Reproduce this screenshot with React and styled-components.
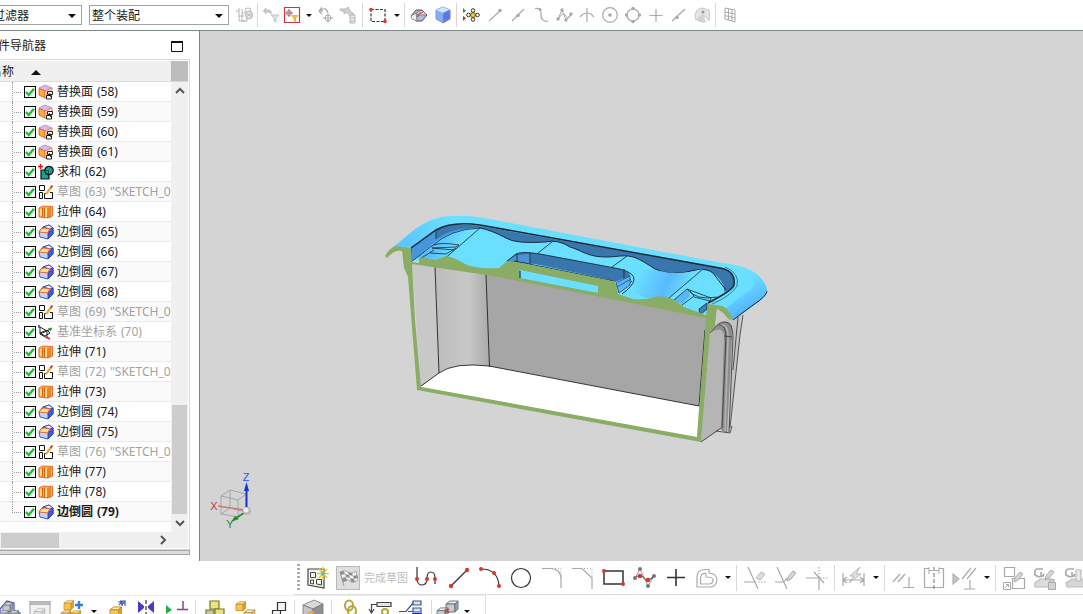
import React from 'react';
import styled, { createGlobalStyle } from 'styled-components';

const GlobalStyle = createGlobalStyle`
  * {
    box-sizing: border-box;
  }

  body {
    margin: 0;
    overflow: hidden;
    background: #fff;
    color: #1a1a1a;
    font-family: 'Noto Sans', 'Noto Sans CJK SC', sans-serif;
    font-size: 12px;
    line-height: 18px;
  }

  button, select, input {
    font: inherit;
    color: inherit;
    margin: 0;
    padding: 0;
  }
`;

const Shell = styled.div`
  display: flex;
  flex-direction: column;
  height: 100vh;
  overflow: hidden;
`;

const TopBar = styled.header`
  display: flex;
  flex: none;
  align-items: center;
  height: 31px;
  border-bottom: 1px solid #7d888b;
  overflow: hidden;
`;

const SelectBox = styled.label`
  display: grid;
  flex: none;
  align-items: center;
  width: ${(p) => p.$width}px;
  height: 20px;
  margin-left: ${(p) => p.$offset}px;
  border: 1px solid #a3a3a3;
`;

const Select = styled.select`
  grid-area: 1 / 1;
  appearance: none;
  height: 18px;
  padding: 1px 0 0 2px;
  border: 0;
  background: transparent;
`;

const SelectArrow = styled.span`
  grid-area: 1 / 1;
  justify-self: end;
  margin: 1px 5px 0 0;
  border: 4px solid transparent;
  border-top-color: #111;
  border-bottom: 0;
  pointer-events: none;
`;

const ToolGroup = styled.div`
  display: flex;
  flex: none;
  align-items: center;
  margin-left: ${(p) => p.$offset || 0}px;
`;

const ToolButton = styled.button`
  display: flex;
  flex: none;
  align-items: center;
  justify-content: center;
  width: ${(p) => p.$width}px;
  height: ${(p) => p.$height || 24}px;
  border: 0;
  background: transparent;

  svg {
    flex: none;
    overflow: visible;
  }
`;

const Caret = styled.span`
  border: 3px solid transparent;
  border-top-color: #111;
  border-bottom: 0;
`;

const Separator = styled.span`
  flex: none;
  width: 1px;
  height: ${(p) => p.$height || 24}px;
  margin: 0 2px;
  background: #d8d8d8;
`;

const Main = styled.main`
  display: flex;
  flex: 1;
  min-height: 0;
`;

const Sidebar = styled.aside`
  display: flex;
  flex: none;
  flex-direction: column;
  width: 200px;
  padding-bottom: 6px;
  border-right: 1px solid #7d888b;
  overflow: hidden;
`;

const SidebarTitle = styled.div`
  display: flex;
  flex: none;
  align-items: center;
  justify-content: space-between;
  height: 28px;
  padding: 2px 16px 0 0;
  margin-left: -2px;
`;

const WindowButton = styled.button`
  display: flex;
  border: 0;
  background: transparent;
`;

const TreeFrame = styled.section`
  display: flex;
  flex: 1;
  flex-direction: column;
  min-height: 0;
  margin-right: 9px;
  padding: 1px 1px 1px 0;
  border: 1px solid #d9d9d9;
  border-left: 0;
`;

const TreeHeader = styled.div`
  display: flex;
  flex: none;
  height: 21px;
  border-bottom: 1px solid #dadada;
  background: #f0f0f0;
`;

const HeaderName = styled.div`
  display: flex;
  flex: 1;
  align-items: center;
  gap: 17px;
  margin-left: -10px;
  padding-top: 2px;
`;

const SortMark = styled.span`
  border: 5px solid transparent;
  border-bottom-color: #111;
  border-top: 0;
`;

const HeaderCorner = styled.div`
  width: 17px;
  background: #bdbdbd;
`;

const TreeBody = styled.div`
  display: flex;
  flex: 1;
  min-height: 0;
`;

const TreeList = styled.ul`
  flex: 1;
  min-width: 0;
  margin: 0;
  padding: 0;
  list-style: none;
  overflow: hidden;
`;

const TreeRow = styled.li`
  display: flex;
  align-items: center;
  height: 20px;
  padding-left: 12px;
  border-bottom: 1px solid #ebebeb;
  white-space: nowrap;
  font-weight: ${(p) => (p.$bold ? 700 : 400)};
  color: ${(p) => (p.$dim ? '#a2a2a2' : '#1a1a1a')};

  &:nth-child(even) {
    background: #fafafa;
  }
`;

const Branch = styled.span`
  flex: none;
  align-self: flex-start;
  width: 9px;
  height: ${(p) => (p.$last ? 11 : 20)}px;
  margin-right: 3px;
  border-left: 1px dotted #9a9a9a;
  background: repeating-linear-gradient(90deg, transparent 0 1px, #9a9a9a 1px 2px) 0 10px / 100% 1px no-repeat;
`;

const RowLabel = styled.label`
  display: flex;
  align-items: center;

  svg {
    flex: none;
    margin: 0 3px 0 2px;
  }
`;

const RowText = styled.span`
  display: flex;
  gap: 4px;
`;

const Check = styled.input`
  flex: none;
  appearance: none;
  width: 12px;
  height: 12px;
  border: 1px solid #000;
  background: #fff;

  &:checked {
    background: #fff url("data:image/svg+xml,%3Csvg xmlns='http://www.w3.org/2000/svg' viewBox='0 0 10 10'%3E%3Cpath d='M1 5L3.7 8L9 1.8' fill='none' stroke='%2310c62e' stroke-width='2.4'/%3E%3C/svg%3E");
  }
`;

const VScroll = styled.div`
  display: flex;
  flex: none;
  flex-direction: column;
  width: 17px;
  padding: 0 1px;
  background: #f0f0f0;
`;

const ScrollButton = styled.button`
  display: flex;
  flex: none;
  align-items: center;
  justify-content: center;
  width: 15px;
  height: 18px;
  border: 0;
  background: transparent;
`;

const ScrollSpace = styled.span`
  flex: ${(p) => p.$share};
`;

const ScrollThumb = styled.span`
  flex: ${(p) => p.$share};
  background: #cdcdcd;
`;

const HScroll = styled.div`
  display: flex;
  flex: none;
  align-items: center;
  height: 16px;
  padding: 0 18px 0 1px;
  background: #f0f0f0;

  span {
    height: 15px;
  }
`;

const Splitter = styled.div`
  flex: none;
  height: 5px;
  margin: 0 9px 0 0;
  border: 1px solid #a5a5a5;
  border-left: 0;
  background: #dcdcdc;
`;

const Viewport = styled.section`
  flex: 1;
  min-width: 0;
  background: #d4d4d4;
  overflow: hidden;

  svg {
    display: block;
    width: 883px;
    height: 530px;
  }
`;

const SketchBar = styled.div`
  display: flex;
  flex: none;
  align-items: center;
  height: 34px;
  margin-left: 294px;
  border-bottom: 1px solid #dcdcdc;
  overflow: hidden;
`;

const Grip = styled.span`
  flex: none;
  width: 3px;
  height: 27px;
  margin: 0 3px;
  background: repeating-linear-gradient(#ababab 0 2px, transparent 2px 4px);
`;

const FinishButton = styled.button`
  display: flex;
  flex: none;
  align-items: center;
  gap: 4px;
  width: 75px;
  margin-left: 4px;
  border: 0;
  background: transparent;
  color: #bdbdbd;
  font-size: 11px;
  white-space: nowrap;
`;

const FinishIcon = styled.span`
  display: flex;
  align-items: center;
  justify-content: center;
  width: 24px;
  height: 24px;
  border: 1px solid #b8b8b8;
  background: #dedede;
`;

const FeatureBar = styled.div`
  display: flex;
  flex: none;
  align-items: flex-start;
  height: 19px;
  overflow: hidden;
`;

const FeatureGroup = styled(ToolGroup)`
  padding: 4px ${(p) => p.$end || 0}px 0 0;
  height: 32px;
  align-items: flex-start;
  border-top: 1px solid #ededed;
  border-right: ${(p) => (p.$end ? '1px solid #dcdcdc' : '0')};
`;

const G = '#a9a9a9';

function Icon({ size = 18, children, stroke = G, width = 1.2 }) {
  return (
    <svg width={size} height={size} viewBox={`0 0 ${size} ${size}`} fill="none" stroke={stroke} strokeWidth={width} aria-hidden="true">
      {children}
    </svg>
  );
}

const Cube = ({ x = 0, y = 0, s = 1, top = '#fff0b4', left = '#f6c650', right = '#e2a32c', line = '#c08a2a' }) => (
  <g transform={`translate(${x} ${y}) scale(${s})`} stroke={line} strokeWidth="1" strokeLinejoin="round">
    <path d="M0 4L4 1H12L9 4Z" fill={top} />
    <path d="M0 4H9V12H0Z" fill={left} />
    <path d="M9 4L12 1V9L9 12Z" fill={right} />
  </g>
);

const Dot = ({ x, y, r = 2, c = '#d9372a' }) => <circle cx={x} cy={y} r={r} fill={c} stroke="none" />;

const Pencil = ({ x, y, c = '#d6d6d6', line = '#a9a9a9' }) => (
  <path d={`M${x} ${y}l1-4l5-6l3 2l-5 6z`} fill={c} stroke={line} strokeWidth="1" />
);

/* top bar */
const topIcons = {
  assembly: (
    <Icon stroke="#b4b4b4" width={1}>
      <path d="M1 5H4V15H10M4 5V2M4 10H9M7 3V15M7 7H12V15H7" />
      <ellipse cx="13" cy="4" rx="3" ry="2" />
      <ellipse cx="14" cy="9" rx="3.500" ry="4" fill="#e6e6e6" />
      <path d="M11 7L17 11M11 11L17 7" strokeWidth=".8" />
    </Icon>
  ),
  undoFilter: (
    <Icon>
      <path d="M1 5L4 2V4H8Q10 5 9 8Q8 5.500 4 6V8Z" fill="#c4c4c4" stroke="#c4c4c4" strokeWidth=".8" />
      <path d="M9 9H17L14 12V16L12 15V12Z" fill="#e2e2e2" stroke="#c2c2c2" strokeWidth="1" />
    </Icon>
  ),
  pickFilter: (
    <Icon>
      <path d="M1.500 1.500H16.500V16.500H1.500Z" stroke="#cc3440" fill="#fff" />
      <circle cx="6" cy="7" r="2.400" stroke="#8a5a62" strokeWidth=".8" />
      <path d="M6 3V11M2.500 7H10" stroke="#8a4a52" strokeWidth=".8" />
      <path d="M8.500 9.500H15L12.500 12V15.500L11 14.500V12Z" fill="#f3ba3e" stroke="#e79f2b" strokeWidth=".7" />
    </Icon>
  ),
  rotatePick: (
    <Icon>
      <path d="M2 5H6M2 5L5 1.500M2 5L5 8M4 4.500Q9 0 11 7" />
      <circle cx="11" cy="12" r="3" strokeWidth="1" />
      <path d="M11 7.500V17M6 12H16" strokeWidth="1" />
    </Icon>
  ),
  pickTree: (
    <Icon stroke="#b6b6b6" width={1}>
      <path d="M1 3H7L9 1L11 5L15 8L12 11L8 6L5 8V5H2Z" fill="#d2d2d2" />
      <path d="M11 9H16V17H11ZM11 12H16M11 15H16" fill="#eee" />
    </Icon>
  ),
  marquee: (
    <Icon>
      <path d="M2 3.500H16V15.500H2Z" stroke="#333" strokeDasharray="3 1.500" />
      <Dot x="2" y="3.500" r="1.800" />
      <Dot x="16" y="15.500" r="1.800" />
    </Icon>
  ),
  clip: (
    <Icon stroke="#555">
      <path d="M1 10L6 4H12L17 9L12 15H6Z" fill="#a9bfdd" strokeWidth="1" />
      <path d="M1 10L6 7L7 15L2 13Z" fill="#e9eef8" strokeWidth=".6" />
      <path d="M6 7L12 4L17 9L8 9Z" fill="#d7dbe2" strokeWidth=".6" />
      <path d="M7.500 11L9 8L13 6" stroke="#dd3b32" />
    </Icon>
  ),
  shaded: (
    <Icon>
      <path d="M2 4L9 1L16 4V13L9 17L2 13Z" fill="#7fb0f6" stroke="#7d98dd" strokeWidth="1" />
      <path d="M2 4L9 1L16 4L9 7Z" fill="#d3e8fb" stroke="#9fc0ea" strokeWidth=".7" />
      <path d="M9 7L16 4V13L9 17Z" fill="#4f7ce8" stroke="#c787a4" strokeWidth=".7" />
    </Icon>
  ),
  snap: (
    <Icon>
      <path d="M1 2L4 5L1 7Z" fill="#14a52b" stroke="none" />
      <path d="M1 10L4 12L1 15Z" fill="#d62222" stroke="none" />
      <path d="M5 9H17M11 3V15" stroke="#333" />
      <circle cx="11" cy="9" r="2.300" fill="#f7d42d" stroke="#a57d15" />
      <g stroke="#333" fill="#fff" strokeWidth="1">
        <circle cx="11" cy="4.500" r="1.800" />
        <circle cx="11" cy="13.500" r="1.800" />
        <circle cx="6.500" cy="9" r="1.800" />
        <circle cx="15.500" cy="9" r="1.800" />
      </g>
    </Icon>
  ),
  endPoint: <Icon><path d="M3 15L14 5" /><Dot x="14" y="4.500" r="1.800" c={G} /></Icon>,
  midPoint: <Icon><path d="M3 15L15 3" /><Dot x="9" y="9.500" r="1.800" c={G} /></Icon>,
  curve: <Icon><path d="M3 2.500Q9 1.500 9 7Q8 15.500 16 15.500" /><Dot x="8" y="3.500" r="1.500" c={G} /></Icon>,
  poles: (
    <Icon width={1}>
      <path d="M3 13L7 4L11 14L16 8M3 13Q8 5 11 10T16 8" />
      <Dot x="3" y="13" r="1.700" c={G} /><Dot x="7" y="4" r="1.700" c={G} /><Dot x="11" y="14" r="1.700" c={G} /><Dot x="16" y="8" r="1.700" c={G} />
    </Icon>
  ),
  intersect: <Icon><path d="M2 11Q9 3 16 11M9 2V16" /></Icon>,
  centre: <Icon><circle cx="9" cy="9" r="7.300" /><Dot x="9" y="9" r="1.800" c={G} /></Icon>,
  quadrant: (
    <Icon>
      <circle cx="9" cy="9" r="6" />
      <Dot x="9" y="2.500" r="1.700" c={G} /><Dot x="9" y="15.500" r="1.700" c={G} />
      <Dot x="2.500" y="9" r="1.700" c={G} /><Dot x="15.500" y="9" r="1.700" c={G} />
    </Icon>
  ),
  plus: <Icon><path d="M9 3V16M2.500 9.500H15.500" /></Icon>,
  onCurve: <Icon><path d="M2 15L15 3" /><Dot x="7" y="11.500" r="1.800" c={G} /></Icon>,
  onFace: (
    <Icon>
      <path d="M2 9Q4 2 9 2L16 4Q17 8 16 15Q13 9 9 9Q6 11 3 14Z" fill="#e6e6e6" stroke="#c6c6c6" strokeWidth="1" />
      <path d="M3 14Q8 8 12 10Q11 14 14 16Q8 18 3 14" fill="#d2d2d2" stroke="none" />
      <Dot x="10" y="6" r="1.600" c="#999" />
    </Icon>
  ),
  grid: <Icon width={1}><path d="M4 2L14 4V16L4 13ZM7.500 3V14M11 3.500V15M4 6L14 8M4 9.500L14 12" /></Icon>,
};

const topTools = [
  ['assembly', 23, 'Assembly selection'], '|',
  ['undoFilter', 22, 'Reset filter'], ['pickFilter', 20, 'General filter'], ['v', 14],
  ['rotatePick', 20, 'Previous'], ['pickTree', 24, 'Select in tree'], '|',
  ['marquee', 26, 'Rectangle select'], ['v', 11], '|',
  ['clip', 24, 'Edge highlight'], ['shaded', 23, 'Shaded'], '|',
  ['snap', 24, 'Snap point'], ['endPoint', 23, 'End point'], ['midPoint', 23, 'Mid point'],
  ['curve', 23, 'Control point'], ['poles', 23, 'Pole'], ['intersect', 23, 'Intersection'],
  ['centre', 23, 'Arc centre'], ['quadrant', 23, 'Quadrant'], ['plus', 23, 'Existing point'],
  ['onCurve', 23, 'Point on curve'], ['onFace', 23, 'Point on face'], '|',
  ['grid', 24, 'Grid'],
];

/* sketch bar */
const sketchIcons = {
  sketch: (
    <Icon size={24} stroke="#444">
      <path d="M2 3H18V22L2 19Z" fill="#f1f5ec" />
      <path d="M4.500 6.500H9.500V11.500H4.500ZM4.500 14H7.500V18L4.500 17.500ZM10.500 13.500H15.500V19L10.500 18Z" strokeWidth="1" />
      <path d="M17 1V14M11 7.500H23M13 3L21 12M21 3L13 12" stroke="#eeca21" strokeWidth="1.500" />
      <path d="M15 7.500H19M17 5.500V9.500" stroke="#57b8dc" strokeWidth="2" />
    </Icon>
  ),
  profile: (
    <Icon size={24} stroke="#333">
      <path d="M2 1V14Q3 19 7 19Q12 19 12 12Q12 6 16 6Q20 6 20 12V18" />
      <Dot x="2" y="13" /><Dot x="12" y="13" /><Dot x="20" y="13" />
    </Icon>
  ),
  line: <Icon size={24} stroke="#333"><path d="M4 20L20 4" /><Dot x="4" y="20" r="2.200" /><Dot x="20" y="4" r="2.200" /></Icon>,
  arc: <Icon size={24} stroke="#333"><path d="M3 3Q20 3 21 20" /><Dot x="3" y="3" /><Dot x="16" y="7" /><Dot x="21" y="20" /></Icon>,
  circle: <Icon size={24} stroke="#333"><circle cx="12" cy="12" r="9.500" /></Icon>,
  fillet: <Icon size={24}><path d="M2 2.500H10Q21 3 21 13V22" /><path d="M12 2.500H21V12" strokeDasharray="1 2" /></Icon>,
  chamfer: <Icon size={24}><path d="M1 2.500H11L21 12V23" /><path d="M13 2.500H21V11" strokeDasharray="1 2" /></Icon>,
  rect: <Icon size={24} stroke="#333"><path d="M2 5H21V18H2Z" strokeWidth="1.500" /><Dot x="2" y="5" /><Dot x="21" y="18" /></Icon>,
  spline: (
    <Icon size={24} stroke="#555">
      <path d="M2 12L7 3L15 20L21 10" stroke="#999" strokeWidth="1" />
      <path d="M2 12Q7 7 11 12Q15 17 21 10" />
      <Dot x="2" y="12" c="#777" /><Dot x="7" y="3" c="#777" /><Dot x="15" y="20" c="#777" /><Dot x="21" y="10" c="#777" />
      <Dot x="7" y="10" r="2.300" /><Dot x="15" y="14" r="2.300" />
    </Icon>
  ),
  point: <Icon size={24} stroke="#333" width={1.6}><path d="M12 3V20M3 11.500H21" /></Icon>,
  offset: (
    <Icon size={24}>
      <path d="M2 21V10Q3 4 9 3.500H14V7Q22 8 22 14Q21 21 15 21Z" />
      <path d="M5.500 18V12Q6 7 11 7.500V11Q18 11 18 14Q18 18 14 18Z" />
    </Icon>
  ),
  trim: <Icon size={24}><path d="M5 1L15 23M1 16H13" /><path d="M15 16H23" strokeDasharray="1.500 1.500" /><path d="M13 12L18 6L22 8L17 14Z" fill="#ddd" strokeWidth=".8" /></Icon>,
  extend: <Icon size={24}><path d="M3 1L13 23M1 16H10L13 12" /><Pencil x={13} y={15} /></Icon>,
  corner: <Icon size={24}><path d="M1 12H14V24M9 6L19 17" /><path d="M14 1V11M15 12H23" strokeDasharray="1.500 1.500" /></Icon>,
  dimension: <Icon size={24}><path d="M1 7V20M22 7V20M1 14H22M5 11L1 14L5 17M18 11L22 14L18 17" /><path d="M18 1L8 10H12L7 17L19 8H14Z" fill="#e2e2e2" strokeWidth=".8" /></Icon>,
  constrain: <Icon size={24}><path d="M2 16L9 8M7 16L14 8M18 11V21M12 21.500H23" /></Icon>,
  symmetric: <Icon size={24}><path d="M7 2.500H2.500V21.500H21.500V2.500H17" /><path d="M12 1V23" strokeDasharray="4 2" stroke="#888" /><path d="M7 1V8M17 1V8M7 4.500H11M13 4.500H17" strokeWidth="1" /></Icon>,
  autoConstrain: <Icon size={24}><path d="M0 8L6 13L0 18Z" fill="#c4c4c4" stroke="#b2b2b2" /><path d="M9 13L18 2M14 13L23 2M17 14V23M11 23H22" /></Icon>,
  showConstraint: (
    <Icon size={24}>
      <path d="M2.500 1.500H12.500V10.500H2.500ZM10.500 12.500H22.500V22.500H10.500Z" />
      <Pencil x={12} y={16} />
      <path d="M1.500 16.500H8.500V23.500H1.500ZM3 22L6.500 18.500M4 18.500H6.500V21" strokeWidth="1" />
    </Icon>
  ),
  convert: (
    <Icon size={24}>
      <path d="M10 3H4Q1 4 2 9Q8 13 11 8M8 6V10H11" strokeWidth="1.600" />
      <path d="M2 17L7 13H18L21 17L18 21H2Z" fill="#dcdcdc" stroke="#bcbcbc" />
      <Pencil x={12} y={14} />
      <path d="M15.500 16.500H22.500V23.500H15.500ZM17 16V13.500H21V16" fill="#d4d4d4" strokeWidth="1" />
    </Icon>
  ),
  alternate: (
    <Icon size={24}>
      <path d="M10 3H4Q1 4 2 9Q8 13 11 8M8 6V10H11" strokeWidth="1.600" />
      <path d="M2 17L8 13H20L24 17V21H3Z" fill="#d6d6d6" stroke="#bcbcbc" />
      <path d="M12 4H17V15H12Z" fill="#e8e8e8" stroke="#bcbcbc" />
    </Icon>
  ),
};

const sketchTools = [
  ['profile', 32, 'Profile'], ['line', 31, 'Line'], ['arc', 31, 'Arc'], ['circle', 31, 'Circle'],
  ['fillet', 31, 'Fillet'], ['chamfer', 31, 'Chamfer'], ['rect', 31, 'Rectangle'], ['spline', 31, 'Spline'],
  ['point', 31, 'Point'], ['offset', 31, 'Offset curve'], ['v', 12], '|',
  ['trim', 31, 'Quick trim'], ['extend', 31, 'Quick extend'], ['corner', 31, 'Make corner'], '|',
  ['dimension', 33, 'Dimension'], ['v', 12], '|',
  ['constrain', 31, 'Constraints'], ['symmetric', 31, 'Symmetric'], ['autoConstrain', 31, 'Auto constrain'], ['v', 13], '|',
  ['showConstraint', 31, 'Show constraints'], ['convert', 31, 'Convert'], ['alternate', 31, 'Alternate solution'],
];

/* feature bar */
const grayCube = { top: '#eceff1', left: '#c6ccd0', right: '#9ba3a8', line: '#6d7478' };
const featureIcons = {
  parts: (
    <Icon size={22}>
      <path d="M1 9L8 1L15 3V10L21 13V22H1Z" fill="#e4e9f8" stroke="#4a53b8" />
      <Cube x={4} y={2} s={0.8} {...grayCube} />
      <Cube x={0} y={10} s={0.8} {...grayCube} />
      <Cube x={10} y={10} s={0.8} {...grayCube} />
    </Icon>
  ),
  windowPart: (
    <Icon size={22} stroke="#b5b5b5">
      <path d="M1 1.500H21V22H1Z" fill="#f2f2f2" />
      <path d="M1 1.500H21V4.500H1Z" fill="#b9bdc0" />
      <Cube x={5} y={8} s={0.9} top="#f8f8f8" left="#e4e4e4" right="#d2d2d2" line="#b8b8b8" />
    </Icon>
  ),
  addPart: (
    <Icon size={22}>
      <Cube x={3} y={0} s={0.8} />
      <Cube x={0} y={10} s={0.8} />
      <Cube x={10} y={10} s={0.8} />
      <path d="M18 1V9M14 5H22" stroke="#2d7fe0" strokeWidth="2.400" />
    </Icon>
  ),
  movePart: <Icon size={22}><Cube x={3} y={6} s={0.95} /><path d="M12 5L15 2H11M15 2V6M15 5L18 1H13M18 1V6" stroke="#3e5da6" /></Icon>,
  mirror: <Icon size={22}><path d="M3 1L9 6V8L3 13ZM19 1L13 6V8L19 13Z" fill="#4a3bc4" stroke="none" /><path d="M11 0V22" stroke="#333" strokeDasharray="4 2" /></Icon>,
  assemblyConstraint: <Icon size={22}><path d="M0 5L6 10L0 14Z" fill="#23b04a" stroke="none" /><path d="M17 1V9M11 9.500H22" stroke="#8d3f88" strokeWidth="1.500" /></Icon>,
  blocks: (
    <Icon size={22} stroke="#77782f">
      <path d="M6 1H15V9H6Z" fill="#eee27a" /><path d="M2 10H10V20H2Z" fill="#c4c79b" /><path d="M11 9H20V19H11Z" fill="#eee27a" />
    </Icon>
  ),
  bodies: <Icon size={22}><Cube x={1} y={1} s={0.8} /><Cube x={9} y={9} s={0.9} top="#eee" left="#f0dca6" right="#ccc" /></Icon>,
  squares: <Icon size={22} stroke="#333"><path d="M12.500 2.500H20.500V10.500H12.500ZM7.500 10.500H15.500V18.500H7.500Z" fill="#f4f4f4" /></Icon>,
  block: (
    <Icon size={22} stroke="#777">
      <path d="M1 5L12 0L21 4L11 9Z" fill="#d6dadc" strokeWidth=".8" /><path d="M1 5L11 9V22H1Z" fill="#c2c7ca" strokeWidth=".8" /><path d="M11 9L21 4V22H11Z" fill="#8c9194" strokeWidth=".8" />
      <path d="M5 15Q9 10 12 13" stroke="#efa93a" strokeWidth="2" />
    </Icon>
  ),
  clip: <Icon size={22} stroke="#b3a83a" width={2}><ellipse cx="9" cy="5.500" rx="4" ry="5" /><ellipse cx="12" cy="11" rx="4" ry="5" /></Icon>,
  measure: <Icon size={22} stroke="#444"><path d="M1 4.500H7M1.500 4.500V12M-1 9L1.500 13L4 9" /><path d="M7 2.500H21V6.500H7Z" fill="#e4e4e4" /><circle cx="15" cy="12" r="3" stroke="#b3a83a" strokeWidth="2" /></Icon>,
  relations: <Icon size={22} stroke="#3d558c"><path d="M-1 11.500H6L13 3M8 11.500H13" /><path d="M13 1H21V5H13ZM13 8H21V12H13Z" fill="#d8e2f5" /><path d="M12 14H22" stroke="#2327b8" strokeWidth="2" /></Icon>,
  sequence: <Icon size={22}><Cube x={9} y={0} s={1} {...grayCube} /><Cube x={0} y={7} s={0.9} {...grayCube} /><path d="M8 9L12 13M12 9L8 13" stroke="#d23b32" /></Icon>,
};

const featureGroups = [
  {
    tools: [
      ['parts', 20, 'Components'], ['windowPart', 40, 'Window'], ['addPart', 24, 'Add component'], ['v', 20],
      ['movePart', 28, 'Move component'], ['mirror', 28, 'Mirror'], ['assemblyConstraint', 33, 'Assembly constraints'], '|',
      ['blocks', 34, 'Unite'], ['bodies', 27, 'Bodies'], ['squares', 33, 'Pattern'],
    ],
  },
  {
    end: 12,
    tools: [
      '|', ['block', 32, 'Block'], '|', ['clip', 34, 'Link'], ['measure', 25, 'Measure'], ['relations', 36, 'Relations'], '|',
      ['sequence', 27, 'Sequence'], ['v', 12],
    ],
  },
];

/* model tree */
const treeIcons = {
  replace: (
    <Icon size={16} width={0.8}>
      <path d="M1 4L7 1L14 4L7 7Z" fill="#dcb8f3" stroke="#b07fd0" />
      <path d="M1 4.500L7 7V14L1 11Z" fill="#fdaf2d" stroke="#e2502a" />
      <path d="M7 7L14 4V8H9V14H7Z" fill="#fbe3c5" stroke="#d9775c" />
      <path d="M9.500 7.500H14.500V10.500H9.500ZM8.500 11.500H13.500V15H8.500ZM11 9L13 13" fill="#fff" stroke="#222" strokeWidth="1" />
    </Icon>
  ),
  unite: (
    <Icon size={16}>
      <path d="M0 2.500H5M2.500 0V5" stroke="#e01313" strokeWidth="1.300" />
      <path d="M3 6H11V15H3Z" fill="#1f9d91" stroke="#111" />
      <circle cx="11" cy="6.500" r="4.200" fill="#1f9d91" stroke="#111" />
      <path d="M7.500 6.500H10.500V10" stroke="#0c4f4a" strokeWidth="1" />
    </Icon>
  ),
  sketch: (
    <Icon size={16} stroke="#111" width={1}>
      <path d="M1.500 1.500H6.500V6.500H1.500ZM1.500 8.500V14.500H4.500V8.500ZM6.500 9.500H8.500M12 8.500H14.500V14.500H6.500V9.500" />
      <path d="M8 10L13 3.500" stroke="#e8a93a" strokeWidth="2.200" />
      <path d="M12.500 4L14.500 1.500" stroke="#b8442f" strokeWidth="2" />
    </Icon>
  ),
  extrude: (
    <Icon size={16} width={0.9}>
      <path d="M1 4L5 2L14.500 2.500V12L10 14L1 13Z" fill="#fcae2f" stroke="#e2622a" />
      <path d="M4.500 4V13M6.500 3.500V13.500M10 4V14M12 3V13" stroke="#d05a1c" />
      <path d="M3 5V12M8.200 4V13" stroke="#ffe680" strokeWidth="1.600" />
    </Icon>
  ),
  blend: (
    <Icon size={16} width={0.9}>
      <path d="M1 8L5 3L11 1L15 4V10L10 15L2 13Z" fill="#c4d5fa" stroke="#2746c0" />
      <path d="M5 3L11 1L15 4L12 5Z" fill="#e6ecfd" stroke="#2746c0" />
      <path d="M10 8L15 4V10L10 15Z" fill="#3c5ee2" stroke="#2442bb" />
      <path d="M1 8Q3 4 6 4L13 5Q10 6 10 9Z" fill="#fde58a" stroke="#e5522f" />
    </Icon>
  ),
  datum: (
    <Icon size={16} stroke="#222" width={1}>
      <path d="M2 3V10L9 14M2 3L9 7V13M2 10L13 5M2 9L9 6L12 9L7 12Z" />
      <path d="M1 1V4" stroke="#2734d6" strokeWidth="1.500" />
      <path d="M10 5L14 4L12 7" stroke="#149a2e" />
      <path d="M8 13L12 15" stroke="#dd1f2f" strokeWidth="1.800" />
    </Icon>
  ),
};

const features = [
  ['replace', '替换面', '(58)'],
  ['replace', '替换面', '(59)'],
  ['replace', '替换面', '(60)'],
  ['replace', '替换面', '(61)'],
  ['unite', '求和', '(62)'],
  ['sketch', '草图', '(63)', '"SKETCH_0'],
  ['extrude', '拉伸', '(64)'],
  ['blend', '边倒圆', '(65)'],
  ['blend', '边倒圆', '(66)'],
  ['blend', '边倒圆', '(67)'],
  ['blend', '边倒圆', '(68)'],
  ['sketch', '草图', '(69)', '"SKETCH_0'],
  ['datum', '基准坐标系', '(70)'],
  ['extrude', '拉伸', '(71)'],
  ['sketch', '草图', '(72)', '"SKETCH_0'],
  ['extrude', '拉伸', '(73)'],
  ['blend', '边倒圆', '(74)'],
  ['blend', '边倒圆', '(75)'],
  ['sketch', '草图', '(76)', '"SKETCH_0'],
  ['extrude', '拉伸', '(77)'],
  ['extrude', '拉伸', '(78)'],
  ['blend', '边倒圆', '(79)'],
];

function Tools({ items, icons, height }) {
  return items.map((item, i) => {
    if (item === '|') return <Separator key={i} $height={height} />;
    const [name, width, label] = item;
    return (
      <ToolButton key={i} type="button" $width={width} $height={height} aria-label={label || 'More'}>
        {name === 'v' ? <Caret /> : icons[name]}
      </ToolButton>
    );
  });
}

function Chevron({ d }) {
  return (
    <svg width="10" height="10" viewBox="0 0 10 10" fill="none" stroke="#555" strokeWidth="2" aria-hidden="true">
      <path d={d} />
    </svg>
  );
}

function Navigator() {
  return (
    <Sidebar>
      <SidebarTitle>
        <span>件导航器</span>
        <WindowButton type="button" aria-label="Maximize">
          <svg width="12" height="11" viewBox="0 0 12 11" fill="none" stroke="#111">
            <path d="M.5 .5H11.500V10.500H.5Z" />
            <path d="M0 1H12" strokeWidth="2" />
          </svg>
        </WindowButton>
      </SidebarTitle>
      <TreeFrame>
        <TreeHeader>
          <HeaderName>
            <span>名称</span>
            <SortMark />
          </HeaderName>
          <HeaderCorner />
        </TreeHeader>
        <TreeBody>
          <TreeList>
            {features.map(([icon, name, number, sketch], i) => (
              <TreeRow key={number} $dim={icon === 'sketch' || icon === 'datum'} $bold={i === features.length - 1}>
                <Branch $last={i === features.length - 1} />
                <RowLabel>
                  <Check type="checkbox" defaultChecked />
                  {treeIcons[icon]}
                  <RowText>
                    <span>{name}</span>
                    <span>{number}</span>
                    {sketch && <span>{sketch}</span>}
                  </RowText>
                </RowLabel>
              </TreeRow>
            ))}
          </TreeList>
          <VScroll>
            <ScrollButton type="button" aria-label="Scroll up"><Chevron d="M1 7L5 3L9 7" /></ScrollButton>
            <ScrollSpace $share={305} />
            <ScrollThumb $share={109} />
            <ScrollButton type="button" aria-label="Scroll down"><Chevron d="M1 3L5 7L9 3" /></ScrollButton>
          </VScroll>
        </TreeBody>
        <HScroll>
          <ScrollThumb $share={58} />
          <ScrollSpace $share={96} />
          <ScrollButton type="button" aria-label="Scroll right"><Chevron d="M3 1L7 5L3 9" /></ScrollButton>
        </HScroll>
      </TreeFrame>
      <Splitter />
    </Sidebar>
  );
}

function Triad() {
  return (
    <g fill="none" fontFamily="'Liberation Sans', sans-serif" fontSize="11" textAnchor="middle">
      <path d="M221 496L230 490L246 494V512L238 517L221 514ZM221 496L238 500V517M238 500L246 494M230 490V508L221 514M230 508L246 512" stroke="#a6a6a6" />
      <path d="M218 506L244 510" stroke="#c77878" strokeWidth="1.500" />
      <path d="M246.500 509V490" stroke="#1236cf" strokeWidth="2" />
      <path d="M244 491L246.500 482L249 491Z" fill="#1236cf" />
      <path d="M244 513L236 518" stroke="#238c33" strokeWidth="2" />
      <path d="M231 522L235 516L239 519Z" fill="#238c33" />
      <circle cx="247" cy="511" r="4" fill="#b8b8b8" />
      <circle cx="246" cy="510" r="2.500" fill="#ececec" />
      <text x="246" y="481" fill="#2455f0">Z</text>
      <text x="214" y="510" fill="#c23434">X</text>
      <text x="230" y="528" fill="#238c33">Y</text>
    </g>
  );
}

function Model() {
  return (
    <svg viewBox="200 31 883 530" role="img" aria-label="Section view of the box and lid">
      <defs>
        <linearGradient id="round" x1="0" x2="1">
          <stop offset="0" stopColor="#bcbcbc" />
          <stop offset=".6" stopColor="#c8c8c8" />
          <stop offset="1" stopColor="#a9a9a9" />
        </linearGradient>
        <linearGradient id="rimEnd" x1="745" y1="280" x2="758" y2="304" gradientUnits="userSpaceOnUse">
          <stop offset="0" stopColor="#6adfff" />
          <stop offset="1" stopColor="#55b4ff" />
        </linearGradient>
        <linearGradient id="rimStart" x1="404" y1="240" x2="450" y2="222" gradientUnits="userSpaceOnUse">
          <stop offset="0" stopColor="#5cc6ff" />
          <stop offset="1" stopColor="#6adfff" />
        </linearGradient>
        <linearGradient id="waveA" x1="435" y1="240" x2="470" y2="262" gradientUnits="userSpaceOnUse">
          <stop offset="0" stopColor="#57b9fb" />
          <stop offset=".55" stopColor="#6adfff" />
          <stop offset="1" stopColor="#6adfff" />
        </linearGradient>
        <linearGradient id="waveB" x1="638" y1="272" x2="686" y2="292" gradientUnits="userSpaceOnUse">
          <stop offset="0" stopColor="#6adfff" />
          <stop offset=".6" stopColor="#5abaff" />
          <stop offset="1" stopColor="#6adfff" />
        </linearGradient>
      </defs>

      {/* box side with the handle rib */}
      <path d="M708 318L741 315L739 345L729 433L721 429L701 442Z" fill="#c4c4c4" />
      <path d="M710 333L724 325L722 428L701 442Z" fill="#b5b5b5" />
      <path d="M710 333Q725 315 732 326L732 340L727 433L721 430L724 335Q722 325 710 333Z" fill="#8e8e8e" />
      <path d="M720 326Q728 322 728 338L725 431" stroke="#b4b4b4" strokeWidth="1.500" fill="none" />
      <path d="M710 333Q719 321 725 322Q733 322 733 337L729 432M719 325Q726 325 726 337L722 428M743 315L740 335L730 428M738 317L733 370M701 442L721 428M716 431L730 433L732 426M724 336L732 337" stroke="#333" strokeWidth=".8" fill="none" />

      {/* interior */}
      <path d="M412 264L436 267L439 373L421 386Z" fill="#c8c8c8" />
      <path d="M435 267L487 275L490 368L439 373Z" fill="url(#round)" />
      <path d="M486 274L707 317L699 407L489 367Z" fill="#a6a6a6" />
      <path d="M421 387L439 373Q454 362 489 366L699 406L697 438Z" fill="#fff" />
      <path d="M435 267L439 373M486 275L489.500 367M421 386L439 373Q454 362 489 366L699 406L705 330" fill="none" stroke="#222" strokeWidth=".9" />

      {/* lid */}
      <path d="M391 249L414 230Q428 219 442 217Q460 214 484 218L722 263Q745 265 757 274Q768 285 767 292Q766 297 753 305L733 320L724 309L706 314L580 289L493 272L412 260V248Z" fill="#6adfff" />
      <path d="M735 266Q756 271 763 281Q768 289 766 294Q763 300 733 320L725 309L751 289Q761 279 735 266Z" fill="url(#rimEnd)" />
      <path d="M391 249L414 230Q428 219 452 216L452 223L436 229L412 247Z" fill="url(#rimStart)" />
      <path d="M411 248L436 230Q452 222 480 226L480 229Q450 229 432 245L411 262Z" fill="#4795dc" />
      <path d="M430 246Q450 228 480 228L467 240L442 261Q434 260 419 261L419 256L432 248Z" fill="url(#waveA)" />
      <path d="M436 230Q453 222 480 226L720 268Q736 273 734 284Q732 289 724 292Q726 283 713 273Q707 268 696 270Q671 277 655 269C638 258 633 255 620 256C590 260 584 251 570 247Q558 239 545 242Q515 244 506 238Q491 230 480 228Q455 226 436 239Z" fill="#3976ae" />
      <path d="M480 228Q491 230 506 238Q515 244 545 242Q558 239 570 247C584 251 590 260 620 256C633 255 638 258 655 269Q671 277 696 270Q707 268 713 273L726 290" fill="none" stroke="#182b37" />
      <path d="M703 269L669 298L645 298L627 288L640 268L660 271Q678 276 703 269Z" fill="url(#waveB)" />
      <path d="M411 248L436 230Q452 221 480 225L720 268Q736 271 734 285Q733 290 708 303" fill="none" stroke="#172830" strokeWidth="1.500" />
      <path d="M725 267Q740 273 737 286Q731 296 712 304" fill="none" stroke="#28647c" strokeWidth=".8" />
      <path d="M411 248V262L432 246Q450 229 480 228L442 261M436 230V239M552 242L538 253M627 256L612 267M703 269L669 298" fill="none" stroke="#173a50" strokeWidth=".9" />
      <path d="M434 245Q441 242 459 245L456 247L432 248L454 250M430 253L446 254L456 248" fill="none" stroke="#172830" strokeWidth=".8" />
      <path d="M420 259L434 250" fill="none" stroke="#172830" strokeWidth=".8" />

      {/* handle slot */}
      <path d="M506 262L516 254Q523 251 540 254L619 269Q630 271 630 276L615 282L606 279L535 264Z" fill="#3976ae" />
      <path d="M508 261L517 255L531 254L530 263Z" fill="#4b91d3" />
      <path d="M507 261L516 254Q522 251 540 254L620 269Q635 273 634 280Q633 286 622 294M517 254V262M530 253V264M514 261L613 281M624 269V278M616 285L630 276M618 290L632 281" fill="none" stroke="#172830" strokeWidth=".9" />
      <path d="M616 283L630 276V285L619 293Z" fill="#59b6fa" stroke="#1e4a6d" strokeWidth=".8" />
      <path d="M617 287L631 279" fill="none" stroke="#1e4a6d" strokeWidth=".8" />

      {/* finger recess at the right */}
      <path d="M674 300L688 289L690 296L682 304Z" fill="#55b5f8" />
      <path d="M674 300L687 289L711 298L709 303M682 305L694 296L690 291M694 297L710 301M687 289Q696 301 717 297" fill="none" stroke="#172830" strokeWidth=".8" />
      <path d="M699 309L707 303V309L700 315Z" fill="#3c7fc0" stroke="#172830" strokeWidth=".8" />

      {/* cut faces */}
      <path d="M385 256Q390 247 397 246L411 248L412 262L419 263V257L435 260L446 256Q454 257 465 264Q474 269 499 268L507 261L517 262L613 281Q617 283 618 294L633 299Q647 300 654 297Q667 294 679 303L684 307L706 315L708 304L722 306Q729 308 733 320L728 319Q722 311 717 309L715 326L710 332L701 442L417 390L408 277L404 268L402 251Q395 249 387 258ZM412 264L415 320L421 387L697 437L706 318L580 293L493 276Z" fill="#8aad65" fillRule="evenodd" />
      <path d="M717 309Q723 312 728 319L718 322L715 326Z" fill="#cacaca" />
      <path d="M520 270L598 286V293L520 278Z" fill="#6adfff" />
      <path d="M520 271V278" stroke="#255584" strokeWidth="1.500" />
      <path d="M767 291Q767 296 753 305L733 320" fill="none" stroke="#1b2c38" />

      <Triad />
    </svg>
  );
}

export default function App() {
  return (
    <Shell>
      <GlobalStyle />
      <TopBar>
        <SelectBox $width={92} $offset={-10}>
          <Select aria-label="Type filter" defaultValue="filter">
            <option value="filter">过滤器</option>
          </Select>
          <SelectArrow />
        </SelectBox>
        <SelectBox $width={140} $offset={7}>
          <Select aria-label="Selection scope" defaultValue="all">
            <option value="all">整个装配</option>
          </Select>
          <SelectArrow />
        </SelectBox>
        <ToolGroup $offset={3}>
          <Tools items={topTools} icons={topIcons} />
        </ToolGroup>
      </TopBar>
      <Main>
        <Navigator />
        <Viewport>
          <Model />
        </Viewport>
      </Main>
      <SketchBar>
        <Grip />
        <ToolButton type="button" $width={29} aria-label="Sketch">{sketchIcons.sketch}</ToolButton>
        <FinishButton type="button">
          <FinishIcon>
            <svg width="20" height="20" viewBox="0 0 20 20" fill="#8f8f8f" stroke="none">
              <path d="M2 4L6 18" stroke="#999" />
              <path d="M2 4Q7 1 10 4T18 3L20 12Q15 16 12 13T5 14Z" fill="#f3f3f3" stroke="#a5a5a5" />
              <path d="M2 4L6 3L7 6L3 7ZM10 4L14 5L15 8L11 7ZM7 6L11 7L12 10L8 9ZM15 8L19 7L20 10L16 11ZM4 10L8 9L9 13L5 14ZM12 10L16 11L17 14L13 14Z" />
            </svg>
          </FinishIcon>
          完成草图
        </FinishButton>
        <Tools items={sketchTools} icons={sketchIcons} height={26} />
      </SketchBar>
      <FeatureBar>
        {featureGroups.map((group, i) => (
          <FeatureGroup key={i} $end={group.end}>
            <Tools items={group.tools} icons={featureIcons} height={22} />
          </FeatureGroup>
        ))}
      </FeatureBar>
    </Shell>
  );
}
